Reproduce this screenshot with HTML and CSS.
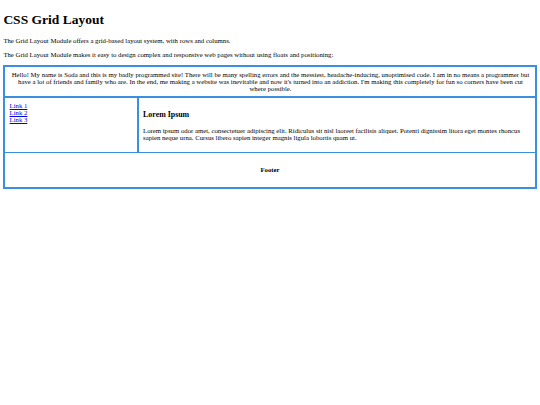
FILE: index.html
```html
<!DOCTYPE html>
<html>
<head>
<meta charset="utf-8">
<title>CSS Grid Layout</title>
<link rel="stylesheet" href="styles.css">
</head>
<body>
<h1 class="title">CSS Grid Layout</h1>
<p class="intro">The Grid Layout Module offers a grid-based layout system, with rows and columns.</p>
<p class="intro">The Grid Layout Module makes it easy to design complex and responsive web pages without using floats and positioning:</p>
<div class="grid">
  <div class="cell header">Hello! My name is Soda and this is my badly programmed site! There will be many spelling errors and the messiest, headache-inducing, unoptimised code. I am in no means a programmer but have a lot of friends and family who are. In the end, me making a website was inevitable and now it's turned into an addiction. I'm making this completely for fun so corners have been cut where possible.</div>
  <div class="cell menu">
    <a href="#">Link 1</a><br>
    <a href="#">Link 2</a><br>
    <a href="#">Link 3</a>
  </div>
  <div class="cell main">
    <h3 class="main-title">Lorem Ipsum</h3>
    <p class="main-text">Lorem ipsum odor amet, consectetuer adipiscing elit. Ridiculus sit nisl laoreet facilisis aliquet. Potenti dignissim litora eget montes rhoncus sapien neque urna. Cursus libero sapien integer magnis ligula lobortis quam ut.</p>
  </div>
  <div class="cell footer">
    <h4 class="footer-title">Footer</h4>
  </div>
</div>
</body>
</html>
```

FILE: styles.css
```css
html {
  background: #ffffff;
}

body {
  margin: 3.375px;
  font-family: "Liberation Serif", "Times New Roman", serif;
  font-size: 6.75px;
  color: #000000;
}

.title {
  font-size: 13.5px;
  font-weight: bold;
  margin: 9.05px 0;
}

.intro {
  margin: 6.75px 0;
}

.grid {
  display: grid;
  grid-template-columns: 132px 1fr;
  gap: 1.5px;
  background: #3a8fe3;
  border: 2px solid #3a8fe3;
}

.cell {
  background: #ffffff;
  padding: 4.2px;
}

.header {
  grid-column: 1 / 3;
  text-align: center;
  padding-left: 5px;
  padding-right: 4px;
}

.menu a {
  color: #0000ee;
}

.main-title {
  font-size: 7.9px;
  margin: 7.9px 0;
}

.main-text {
  margin: 6.75px 0;
}

.footer {
  grid-column: 1 / 3;
  text-align: center;
}

.footer-title {
  font-size: 6.75px;
  margin: 9px 0;
}
```
